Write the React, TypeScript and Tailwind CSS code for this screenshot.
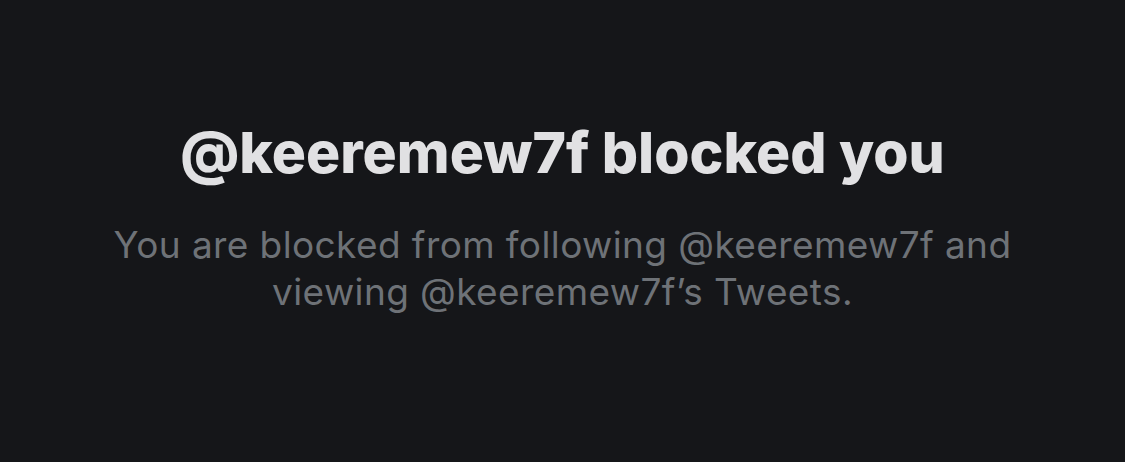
export default function App() {
  return (
    <div className="w-[1125px] h-[462px] bg-[#151619] flex flex-col items-center" style={{ fontFamily: "Inter, 'Noto Sans', sans-serif" }}>
      <h1 className="mt-[118px] text-[57px] leading-[70px] font-extrabold text-[#e1e1e3] tracking-[0px]">@keeremew7f blocked you</h1>
      <p className="mt-[33px] text-[37px] leading-[47px] text-[#6e7277] text-center tracking-[0.4px]">
        You are blocked from following @keeremew7f and
        <br />
        viewing @keeremew7f’s Tweets.
      </p>
    </div>
  );
}
